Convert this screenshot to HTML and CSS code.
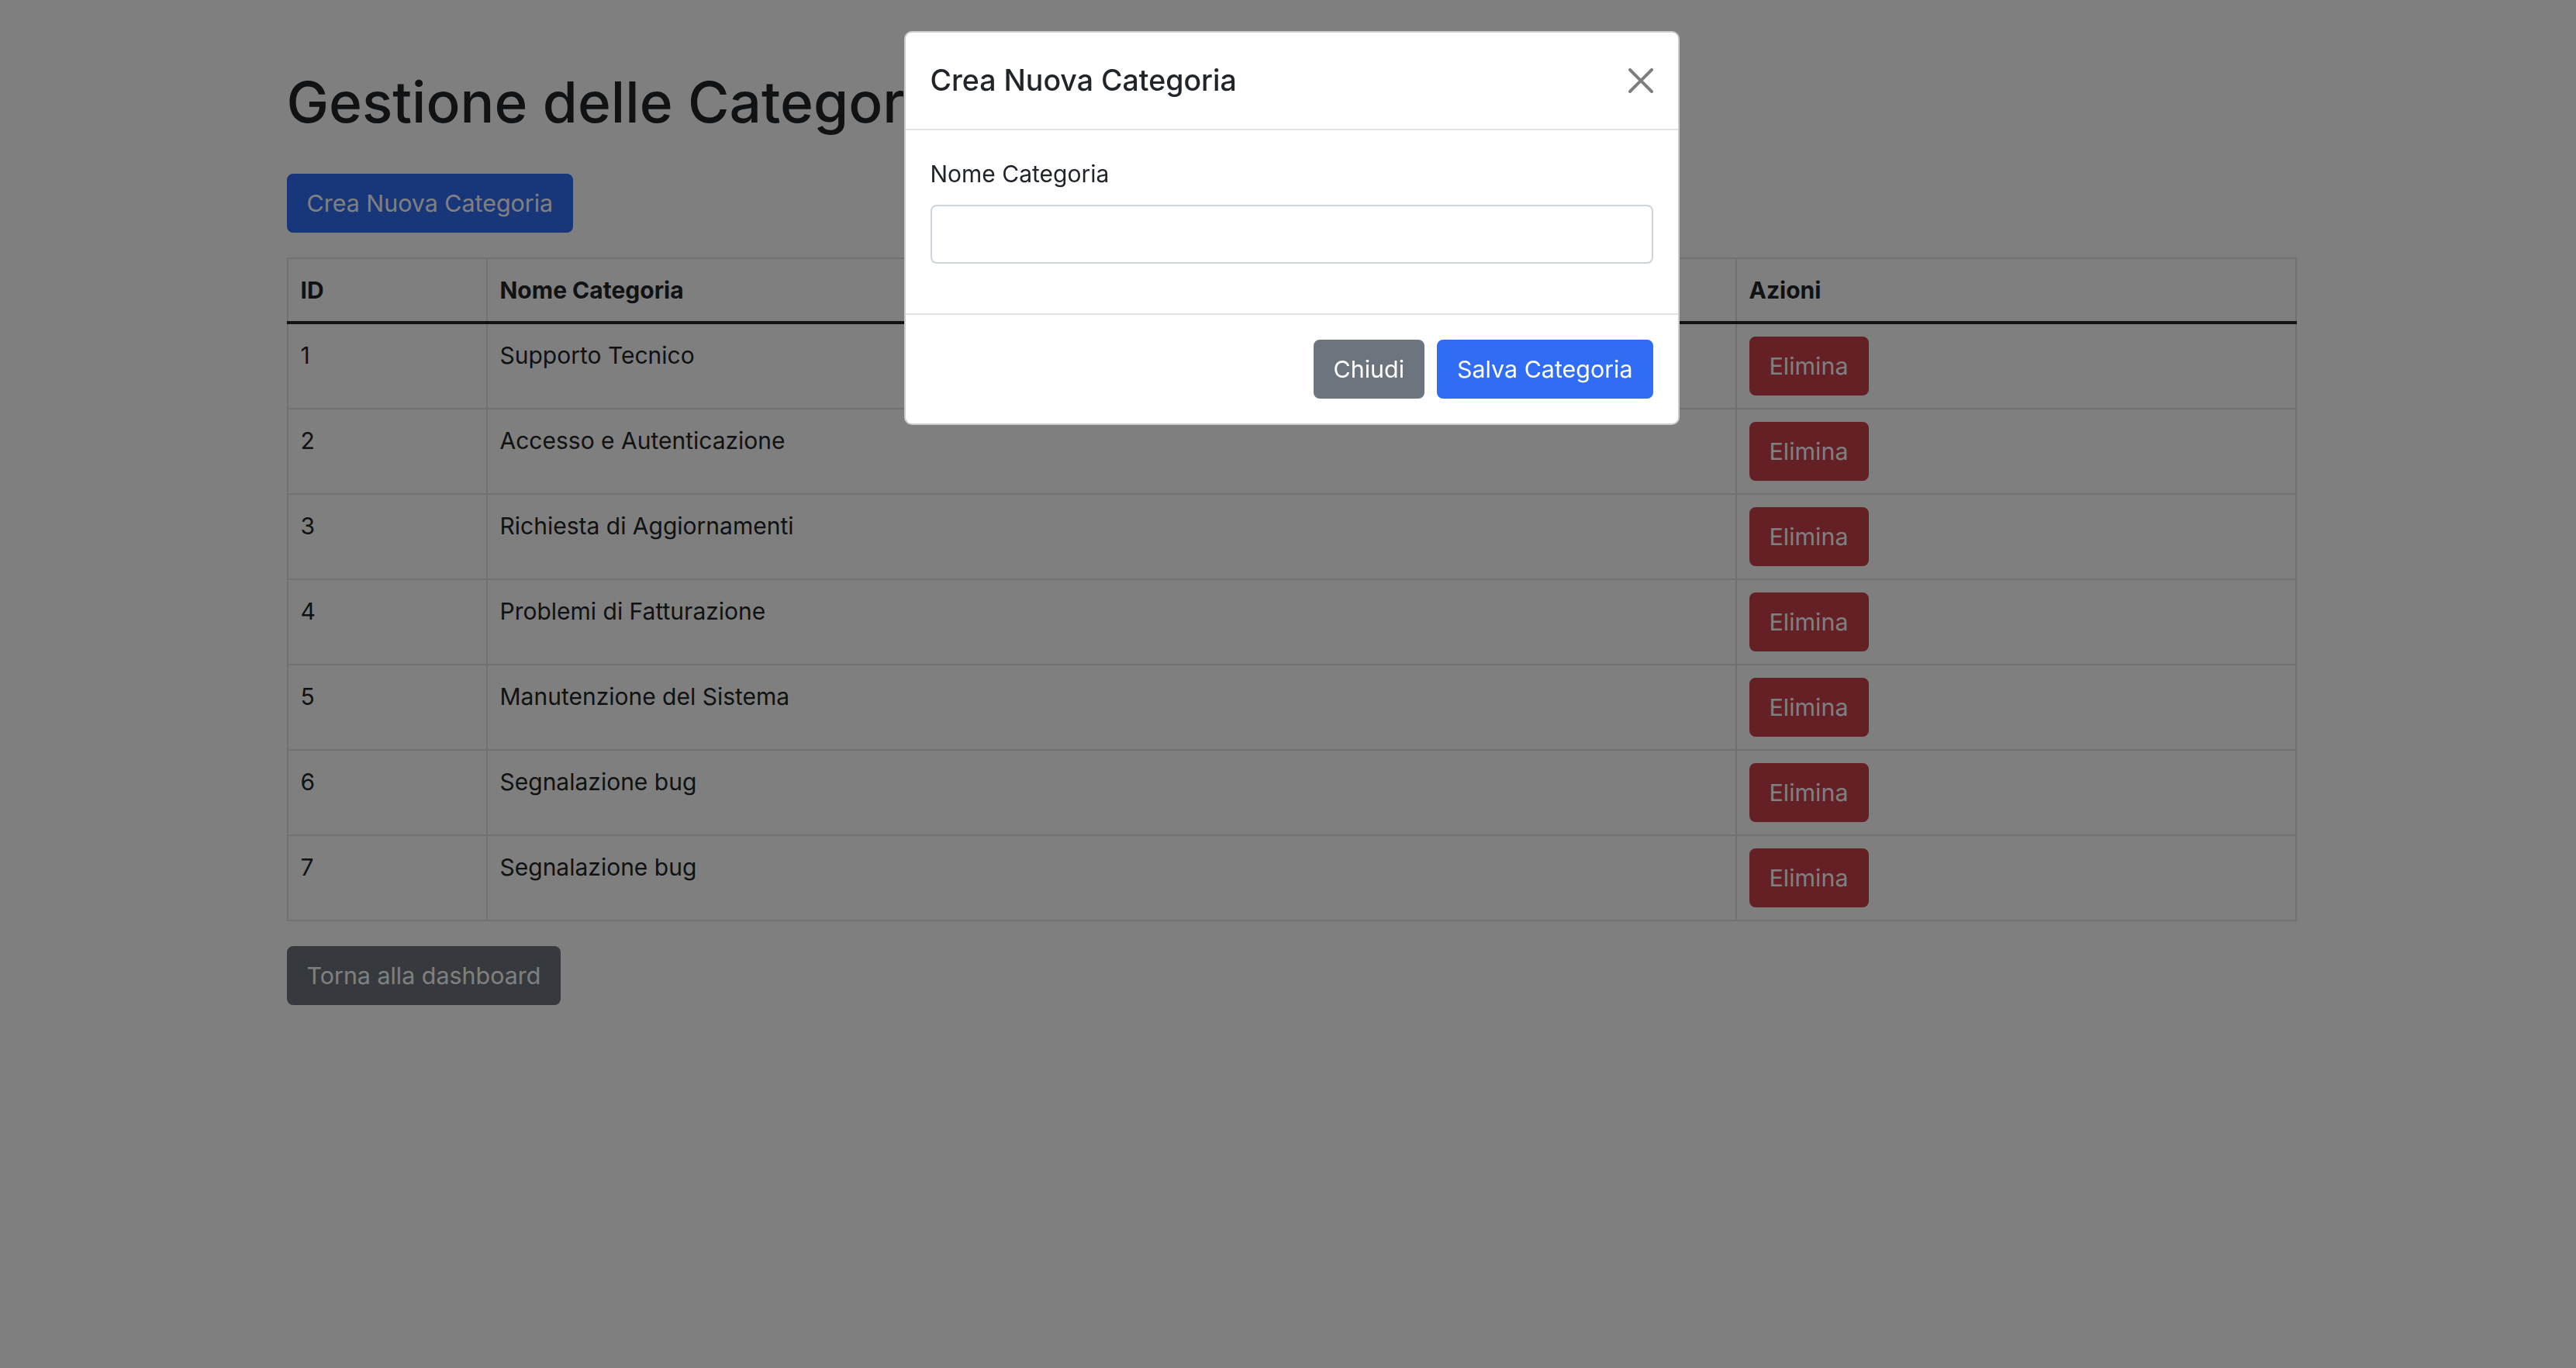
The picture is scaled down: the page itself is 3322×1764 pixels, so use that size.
FILE: index.html
```html
<!DOCTYPE html>
<html lang="it">
<head>
<meta charset="utf-8">
<title>Gestione delle Categorie</title>
<link rel="stylesheet" href="styles.css">
</head>
<body>
<div class="page">
  <div class="container">
    <h1 class="title">Gestione delle Categorie</h1>
    <button class="btn btn-primary btn-create">Crea Nuova Categoria</button>
    <table class="table">
      <colgroup>
        <col class="col-id">
        <col class="col-name">
        <col class="col-actions">
      </colgroup>
      <thead>
        <tr><th>ID</th><th>Nome Categoria</th><th>Azioni</th></tr>
      </thead>
      <tbody>
        <tr><td>1</td><td>Supporto Tecnico</td><td><button class="btn btn-danger">Elimina</button></td></tr>
        <tr><td>2</td><td>Accesso e Autenticazione</td><td><button class="btn btn-danger">Elimina</button></td></tr>
        <tr><td>3</td><td>Richiesta di Aggiornamenti</td><td><button class="btn btn-danger">Elimina</button></td></tr>
        <tr><td>4</td><td>Problemi di Fatturazione</td><td><button class="btn btn-danger">Elimina</button></td></tr>
        <tr><td>5</td><td>Manutenzione del Sistema</td><td><button class="btn btn-danger">Elimina</button></td></tr>
        <tr><td>6</td><td>Segnalazione bug</td><td><button class="btn btn-danger">Elimina</button></td></tr>
        <tr><td>7</td><td>Segnalazione bug</td><td><button class="btn btn-danger">Elimina</button></td></tr>
      </tbody>
    </table>
    <a class="btn btn-secondary" href="#">Torna alla dashboard</a>
  </div>
</div>
<div class="backdrop"></div>
<div class="modal">
  <div class="modal-dialog">
    <div class="modal-content">
      <div class="modal-header">
        <h5 class="modal-title">Crea Nuova Categoria</h5>
        <button class="btn-close" aria-label="Close">
          <svg viewBox="0 0 16 16" width="32" height="32"><path d="M.293.293a1 1 0 011.414 0L8 6.586 14.293.293a1 1 0 111.414 1.414L9.414 8l6.293 6.293a1 1 0 01-1.414 1.414L8 9.414l-6.293 6.293a1 1 0 01-1.414-1.414L6.586 8 .293 1.707a1 1 0 010-1.414z" fill="#000"/></svg>
        </button>
      </div>
      <div class="modal-body">
        <div class="field">
          <label class="form-label" for="nome">Nome Categoria</label>
          <input class="form-control" id="nome" type="text">
        </div>
      </div>
      <div class="modal-footer">
        <button class="btn btn-secondary btn-m">Chiudi</button>
        <button class="btn btn-primary btn-m">Salva Categoria</button>
      </div>
    </div>
  </div>
</div>
</body>
</html>
```

FILE: styles.css
```css
* { box-sizing: border-box; }

html, body {
  margin: 0;
  padding: 0;
  height: 100%;
}

body {
  font-family: Inter, "Liberation Sans", sans-serif;
  font-size: 30px;
  line-height: 48px;
  color: #212529;
  background: #fff;
}

.page {
  padding-left: 9px;
  min-height: 100%;
}

.container {
  width: 2640px;
  margin: 0 auto;
  padding: 0 24px;
}

.title {
  margin: 84px 0 44px;
  font-size: 73px;
  line-height: 96px;
  font-weight: 500;
  white-space: nowrap;
}

.btn {
  display: inline-block;
  font-family: inherit;
  font-size: 30.4px;
  line-height: 48px;
  font-weight: 400;
  padding: 12px 24px;
  border: 2px solid transparent;
  border-radius: 8px;
  text-decoration: none;
  cursor: pointer;
  vertical-align: middle;
}

.btn-primary { background: #316cf4; border-color: #316cf4; color: #fff; }
.btn-secondary { background: #6c757d; border-color: #6c757d; color: #fff; }
.btn-danger { background: #c8404a; border-color: #c8404a; color: #fff; }

.btn-create { margin-bottom: 32px; }

.table {
  width: 100%;
  border-collapse: collapse;
  table-layout: fixed;
  margin-bottom: 32px;
  vertical-align: top;
  border: 2px solid #dee2e6;
}

.col-id { width: 257px; }
.col-name { width: 1611px; }

.table th,
.table td {
  padding: 16px;
  border: 2px solid #dee2e6;
  text-align: left;
  vertical-align: top;
}

.table th { font-weight: 700; vertical-align: bottom; }

.table tbody tr:first-child td { border-top: 4px solid #212529; }

.backdrop {
  position: fixed;
  inset: 0;
  background: rgba(0, 0, 0, 0.5);
}

.modal {
  position: fixed;
  inset: 0;
  padding-left: 9px;
}

.modal-dialog {
  width: 1000px;
  margin: 40px auto 0;
}

.modal-content {
  background: #fff;
  border: 2px solid rgba(0, 0, 0, 0.2);
  border-radius: 10px;
  display: flex;
  flex-direction: column;
}

.modal-header {
  display: flex;
  align-items: center;
  padding: 32px;
  border-bottom: 2px solid #dee2e6;
}

.modal-title {
  margin: 0;
  font-size: 37.5px;
  line-height: 60px;
  font-weight: 500;
}

.btn-close {
  box-sizing: content-box;
  width: 32px;
  height: 32px;
  padding: 16px;
  margin: -16px -16px -16px auto;
  border: 0;
  background: transparent;
  opacity: 0.5;
  display: flex;
  align-items: center;
  justify-content: center;
  cursor: pointer;
}

.btn-close svg { display: block; }

.modal-body { padding: 32px; }

.field { margin-bottom: 32px; }

.form-label {
  display: inline-block;
  margin-bottom: 16px;
}

.form-control {
  display: block;
  width: 100%;
  height: 76px;
  padding: 12px 24px;
  font-family: inherit;
  font-size: 30px;
  line-height: 48px;
  color: #212529;
  background: #fff;
  border: 2px solid #ced4da;
  border-radius: 8px;
}

.modal-footer {
  display: flex;
  justify-content: flex-end;
  align-items: center;
  padding: 24px;
  border-top: 2px solid #dee2e6;
}

.btn-m { margin: 8px; }
```
